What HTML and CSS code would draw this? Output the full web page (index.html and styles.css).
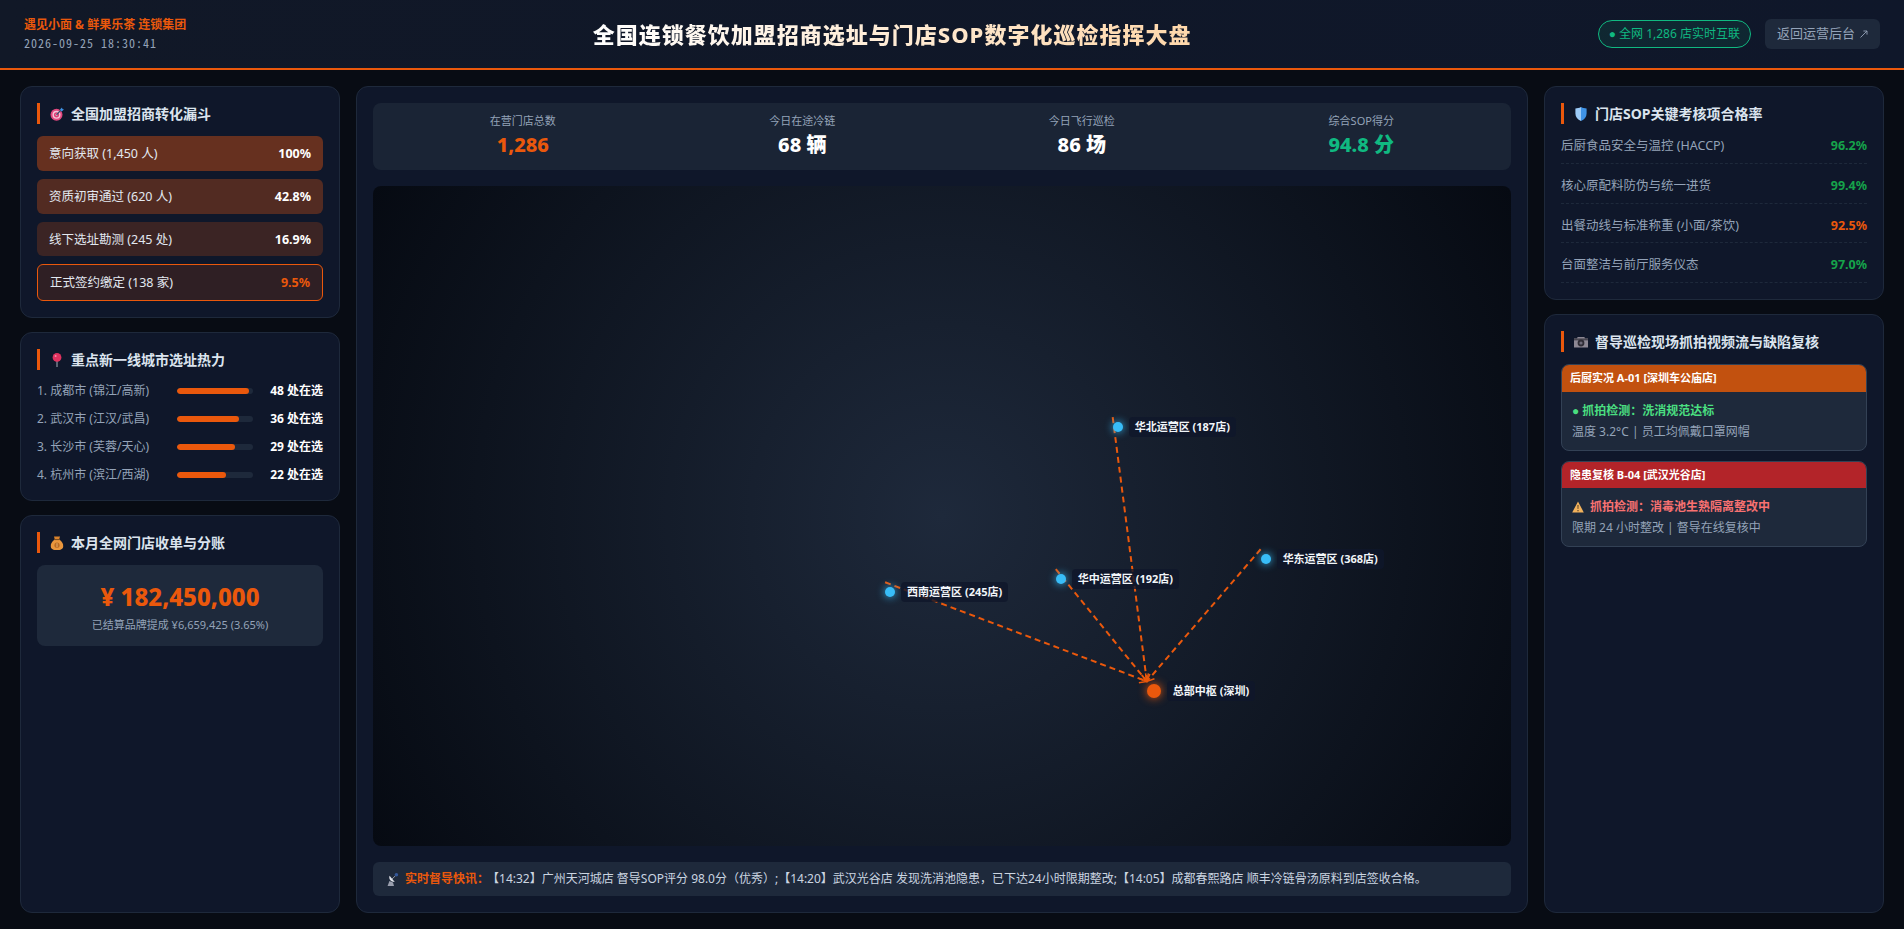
FILE: index.html
```html
<!DOCTYPE html>
<html lang="zh-CN">
<head>
    <meta charset="UTF-8">
    <meta name="viewport" content="width=device-width, initial-scale=1.0">
    <title>全国连锁餐饮加盟招商选址与门店SOP数字化巡检指挥大盘</title>
    <link rel="stylesheet" href="styles.css">
</head>
<body>
    <header class="topbar">
        <div class="brand">
            <div class="brand-name">遇见小面 &amp; 鲜果乐茶 连锁集团</div>
            <div class="brand-time">2026-09-25 18:30:41</div>
        </div>
        <h1 class="page-title">全国连锁餐饮加盟招商选址与门店SOP数字化巡检指挥大盘</h1>
        <div class="top-actions">
            <span class="status-pill"><span class="bullet">●</span> 全网 1,286 店实时互联</span>
            <a href="#" class="btn-back">返回运营后台
                <svg class="back-arrow" viewBox="0 0 8 8"><path d="M0.5 7.5 L7 1 M3.4 1 L7 1 L7 4.6" fill="none" stroke="#94a3b8" stroke-width="0.9"/></svg>
            </a>
        </div>
    </header>

    <main class="layout">
        <!-- left column -->
        <section class="column">
            <div class="panel">
                <h2 class="panel-title">
                    <svg class="title-icon" viewBox="0 0 14 14">
                        <circle cx="6.5" cy="7.8" r="6" fill="#e2487f"/>
                        <circle cx="6.5" cy="7.8" r="4" fill="#f6c6d8"/>
                        <circle cx="6.5" cy="7.8" r="2.6" fill="#dc3f76"/>
                        <circle cx="6.5" cy="7.8" r="1" fill="#f6c6d8"/>
                        <path d="M6.5 7.8 L11 3" stroke="#35506e" stroke-width="1.2"/>
                        <path d="M10 2.6 L12 0.4 L12.4 2 L14 2.4 L11.6 4.4 Z" fill="#3f93e6"/>
                    </svg>
                    全国加盟招商转化漏斗
                </h2>
                <div class="funnel">
                    <div class="funnel-row funnel-1"><span>意向获取 (1,450 人)</span><b>100%</b></div>
                    <div class="funnel-row funnel-2"><span>资质初审通过 (620 人)</span><b>42.8%</b></div>
                    <div class="funnel-row funnel-3"><span>线下选址勘测 (245 处)</span><b>16.9%</b></div>
                    <div class="funnel-row funnel-4"><span>正式签约缴定 (138 家)</span><b>9.5%</b></div>
                </div>
            </div>

            <div class="panel">
                <h2 class="panel-title">
                    <svg class="title-icon" viewBox="0 0 14 14">
                        <path d="M7 5 L7 14" stroke="#a9b1bb" stroke-width="1"/>
                        <circle cx="7" cy="4.4" r="4.4" fill="#e0325f"/>
                        <circle cx="5.6" cy="3" r="1" fill="#f58aa6"/>
                    </svg>
                    重点新一线城市选址热力
                </h2>
                <div class="city-list">
                    <div class="city-row">
                        <span class="city-name">1. 成都市 (锦江/高新)</span>
                        <div class="city-bar"><div class="city-fill" style="width: 95%"></div></div>
                        <b class="city-value">48 处在选</b>
                    </div>
                    <div class="city-row">
                        <span class="city-name">2. 武汉市 (江汉/武昌)</span>
                        <div class="city-bar"><div class="city-fill" style="width: 82%"></div></div>
                        <b class="city-value">36 处在选</b>
                    </div>
                    <div class="city-row">
                        <span class="city-name">3. 长沙市 (芙蓉/天心)</span>
                        <div class="city-bar"><div class="city-fill" style="width: 76%"></div></div>
                        <b class="city-value">29 处在选</b>
                    </div>
                    <div class="city-row">
                        <span class="city-name">4. 杭州市 (滨江/西湖)</span>
                        <div class="city-bar"><div class="city-fill" style="width: 65%"></div></div>
                        <b class="city-value">22 处在选</b>
                    </div>
                </div>
            </div>

            <div class="panel panel-fill">
                <h2 class="panel-title">
                    <svg class="title-icon" viewBox="0 0 14 14">
                        <path d="M4.6 3.6 C1.6 6 0.6 8 0.8 10.4 C1 13 3.4 14 7 14 C10.6 14 13 13 13.2 10.4 C13.4 8 12.4 6 9.4 3.6 Z" fill="#e9963d"/>
                        <path d="M4 0.6 L10 0.6 L9.2 3.6 L4.8 3.6 Z" fill="#d9822b"/>
                        <path d="M4.4 3.6 L9.6 3.6" stroke="#7a4a1c" stroke-width="1"/>
                        <circle cx="7" cy="9.2" r="2.6" fill="#b96a22"/>
                        <path d="M7 7.2 L7 11.2" stroke="#f3c07d" stroke-width="0.8"/>
                    </svg>
                    本月全网门店收单与分账
                </h2>
                <div class="money-box">
                    <div class="money-amount">¥ 182,450,000</div>
                    <div class="money-sub">已结算品牌提成 ¥6,659,425 (3.65%)</div>
                </div>
            </div>
        </section>

        <!-- center column -->
        <section class="panel panel-center">
            <div class="kpi-bar">
                <div class="kpi"><div class="kpi-label">在营门店总数</div><div class="kpi-value orange">1,286</div></div>
                <div class="kpi"><div class="kpi-label">今日在途冷链</div><div class="kpi-value">68 辆</div></div>
                <div class="kpi"><div class="kpi-label">今日飞行巡检</div><div class="kpi-value">86 场</div></div>
                <div class="kpi"><div class="kpi-label">综合SOP得分</div><div class="kpi-value green">94.8 分</div></div>
            </div>

            <div class="map">
                <svg class="map-lines">
                    <defs>
                        <marker id="arrow" markerUnits="userSpaceOnUse" markerWidth="10" markerHeight="10" refX="8" refY="5" orient="auto">
                            <path d="M1,1 L8,5 L1,9" fill="none" stroke="#ea580c" stroke-width="1.5"/>
                        </marker>
                    </defs>
                    <line x1="65%" y1="35%" x2="68%" y2="75%" marker-end="url(#arrow)"/>
                    <line x1="60%" y1="58%" x2="68%" y2="75%" marker-end="url(#arrow)"/>
                    <line x1="45%" y1="60%" x2="68%" y2="75%" marker-end="url(#arrow)"/>
                    <line x1="78%" y1="55%" x2="68%" y2="75%" marker-end="url(#arrow)"/>
                </svg>
                <div class="node node-hq"><span class="dot dot-hq"></span><span class="node-label">总部中枢 (深圳)</span></div>
                <div class="node node-north"><span class="dot"></span><span class="node-label">华北运营区 (187店)</span></div>
                <div class="node node-central"><span class="dot"></span><span class="node-label">华中运营区 (192店)</span></div>
                <div class="node node-west"><span class="dot"></span><span class="node-label">西南运营区 (245店)</span></div>
                <div class="node node-east"><span class="dot"></span><span class="node-label">华东运营区 (368店)</span></div>
            </div>

            <div class="ticker">
                <svg class="ticker-icon" viewBox="0 0 12 13">
                    <path d="M2.4 8 L6 9.4 L7 13 L0.6 13 Z" fill="#9a9fae"/>
                    <path d="M2.6 2.8 C1.4 5.6 3.4 9 7.8 9 Z" fill="#e2e5ec"/>
                    <path d="M5 6 L8.6 2.6" stroke="#aeb4c0" stroke-width="0.8"/>
                    <circle cx="9.4" cy="1.8" r="1.8" fill="#34589a"/>
                </svg>
                <b class="ticker-label">实时督导快讯：</b>
                <span>【14:32】广州天河城店 督导SOP评分 98.0分（优秀）;【14:20】武汉光谷店 发现洗消池隐患，已下达24小时限期整改;【14:05】成都春熙路店 顺丰冷链骨汤原料到店签收合格。</span>
            </div>
        </section>

        <!-- right column -->
        <section class="column">
            <div class="panel">
                <h2 class="panel-title">
                    <svg class="title-icon" viewBox="0 0 14 14">
                        <path d="M7 0 C5 1 3.4 1.4 1.4 1.4 L1.4 6.6 C1.4 10 3.6 12.6 7 14 Z" fill="#9ccbf7"/>
                        <path d="M7 0 C9 1 10.6 1.4 12.6 1.4 L12.6 6.6 C12.6 10 10.4 12.6 7 14 Z" fill="#3f93e6"/>
                    </svg>
                    门店SOP关键考核项合格率
                </h2>
                <div class="sop-list">
                    <div class="sop-row"><span>后厨食品安全与温控 (HACCP)</span><b class="green-dark">96.2%</b></div>
                    <div class="sop-row"><span>核心原配料防伪与统一进货</span><b class="green-dark">99.4%</b></div>
                    <div class="sop-row"><span>出餐动线与标准称重 (小面/茶饮)</span><b class="orange">92.5%</b></div>
                    <div class="sop-row"><span>台面整洁与前厅服务仪态</span><b class="green-dark">97.0%</b></div>
                </div>
            </div>

            <div class="panel panel-fill">
                <h2 class="panel-title">
                    <svg class="title-icon" viewBox="0 0 14 14">
                        <path d="M0 3.4 L3 3.4 L3.6 2 L10.4 2 L11 3.4 L14 3.4 L14 12.4 L0 12.4 Z" fill="#8d8894"/>
                        <path d="M0 3.4 L14 3.4 L14 5.4 L0 5.4 Z" fill="#4a4852"/>
                        <circle cx="7" cy="8" r="3.4" fill="#2f2d36"/>
                        <circle cx="7" cy="8" r="1.6" fill="#6d6a78"/>
                    </svg>
                    督导巡检现场抓拍视频流与缺陷复核
                </h2>
                <div class="cam-list">
                    <div class="cam-card">
                        <div class="cam-head cam-head-ok">后厨实况 A-01 [深圳车公庙店]</div>
                        <div class="cam-body">
                            <div class="cam-check cam-ok"><span class="bullet">●</span> 抓拍检测：洗消规范达标</div>
                            <div class="cam-note">温度 3.2°C | 员工均佩戴口罩网帽</div>
                        </div>
                    </div>
                    <div class="cam-card">
                        <div class="cam-head cam-head-bad">隐患复核 B-04 [武汉光谷店]</div>
                        <div class="cam-body">
                            <div class="cam-check cam-bad">
                                <svg class="warn-icon" viewBox="0 0 12 12">
                                    <path d="M6 0.6 L11.8 11.4 L0.2 11.4 Z" fill="#f2b25c"/>
                                    <path d="M5.4 4 L6.6 4 L6.4 8 L5.6 8 Z M5.4 9 L6.6 9 L6.6 10.2 L5.4 10.2 Z" fill="#5b4326"/>
                                </svg>
                                抓拍检测：消毒池生熟隔离整改中
                            </div>
                            <div class="cam-note">限期 24 小时整改 | 督导在线复核中</div>
                        </div>
                    </div>
                </div>
            </div>
        </section>
    </main>
</body>
</html>
```

FILE: styles.css
```css
* {
    box-sizing: border-box;
}
body {
    font-family: "Noto Sans", "Noto Sans CJK SC", sans-serif;
    line-height: 1.5;
    margin: 0;
    height: 929px;
    overflow: hidden;
    display: flex;
    flex-direction: column;
    background-color: #080c14;
    color: #e2e8f0;
}

/* top bar */
.topbar {
    height: 70px;
    flex: none;
    display: flex;
    align-items: center;
    justify-content: space-between;
    padding: 0 24px;
    background: linear-gradient(90deg, #111827, #0f172a);
    border-bottom: 2px solid #ea580c;
}
.brand-name {
    font-size: 12px;
    font-weight: 700;
    color: #ea580c;
}
.brand-time {
    font-family: "Noto Sans Mono CJK SC", "Liberation Mono", monospace;
    font-size: 12px;
    letter-spacing: 1px;
    color: #94a3b8;
}
.page-title {
    margin: 0;
    font-size: 22px;
    font-weight: 800;
    letter-spacing: 1px;
    background: linear-gradient(90deg, #ffffff, #fed7aa);
    -webkit-background-clip: text;
    background-clip: text;
    color: transparent;
}
.top-actions {
    display: flex;
    align-items: center;
    gap: 14px;
}
.status-pill {
    height: 28px;
    display: flex;
    align-items: center;
    gap: 3px;
    padding: 0 10px;
    font-size: 12px;
    color: #10b981;
    background: rgba(16, 185, 129, 0.1);
    border: 1px solid #10b981;
    border-radius: 14px;
}
.bullet {
    font-family: "Liberation Sans", sans-serif;
}
.btn-back {
    height: 30px;
    display: flex;
    align-items: center;
    gap: 5px;
    padding: 0 12px 0 12px;
    font-size: 13px;
    color: #94a3b8;
    background: #1e293b;
    border-radius: 6px;
    text-decoration: none;
}
.back-arrow {
    width: 8px;
    height: 8px;
    flex: none;
}

/* page grid */
.layout {
    flex: 1;
    min-height: 0;
    display: grid;
    grid-template-columns: 320px 1fr 340px;
    gap: 16px;
    padding: 16px 20px;
}
.column {
    display: flex;
    flex-direction: column;
    gap: 14px;
    min-height: 0;
}
.panel {
    background: #0f172a;
    border: 1px solid #1e293b;
    border-radius: 12px;
    padding: 16px;
}
.panel-fill {
    flex: 1;
}
.panel-title {
    display: flex;
    align-items: center;
    gap: 7px;
    margin: 0 0 12px;
    padding-left: 10px;
    border-left: 3px solid #ea580c;
    font-size: 14px;
    font-weight: 700;
    color: #dbe4ee;
}
.title-icon {
    width: 14px;
    height: 14px;
    flex: none;
}

/* funnel */
.funnel {
    display: flex;
    flex-direction: column;
    gap: 8px;
}
.funnel-row {
    display: flex;
    justify-content: space-between;
    padding: 9px 12px 7px;
    font-size: 12.5px;
    border-radius: 6px;
}
.funnel-row b {
    color: #fff;
}
.funnel-1 { background: #66301f; }
.funnel-2 { background: #522b22; }
.funnel-3 { background: #3b2424; }
.funnel-4 {
    background: #2f1f24;
    border: 1px solid #ea580c;
}
.funnel-4 b {
    color: #ea580c;
}

/* city list */
.city-list {
    display: flex;
    flex-direction: column;
    gap: 10px;
}
.city-row {
    display: flex;
    align-items: center;
    font-size: 12px;
}
.city-name {
    width: 140px;
    color: #94a3b8;
}
.city-bar {
    flex: 1;
    height: 6px;
    background: #1e293b;
    border-radius: 3px;
    overflow: hidden;
}
.city-fill {
    height: 100%;
    background: #ea580c;
    border-radius: 3px;
}
.city-value {
    width: 70px;
    text-align: right;
    color: #fff;
}

/* money */
.money-box {
    background: #1e293b;
    border-radius: 8px;
    padding: 14px 14px 12px;
    text-align: center;
}
.money-amount {
    font-size: 24px;
    font-weight: 800;
    color: #ea580c;
}
.money-sub {
    font-size: 11px;
    color: #94a3b8;
    margin-top: 2px;
}

/* center */
.panel-center {
    display: flex;
    flex-direction: column;
    gap: 16px;
    min-height: 0;
}
.kpi-bar {
    display: grid;
    grid-template-columns: repeat(4, 1fr);
    padding: 10px;
    background: #1a2435;
    border-radius: 8px;
    text-align: center;
}
.kpi-label {
    font-size: 11px;
    color: #94a3b8;
}
.kpi-value {
    font-size: 20px;
    font-weight: 800;
    color: #fff;
}
.orange { color: #ea580c; }
.kpi-value.green { color: #10b981; }
.green-dark { color: #16a34a; }

.map {
    position: relative;
    flex: 1;
    min-height: 0;
    border-radius: 8px;
    overflow: hidden;
    background: radial-gradient(circle at center, #1e293b 0%, #060a12 100%);
}
.map-lines {
    position: absolute;
    left: 0;
    top: 0;
    width: 100%;
    height: 100%;
}
.map-lines line {
    stroke: #ea580c;
    stroke-width: 2;
    stroke-dasharray: 6 4;
}
.node {
    position: absolute;
    display: flex;
    align-items: center;
    gap: 6px;
}
.node-hq { left: 68%; top: 75%; }
.node-north { left: 65%; top: 35%; }
.node-central { left: 60%; top: 58%; }
.node-west { left: 45%; top: 60%; }
.node-east { left: 78%; top: 55%; }
.dot {
    width: 10px;
    height: 10px;
    border-radius: 50%;
    background: #38bdf8;
    box-shadow: 0 0 8px #38bdf8;
}
.dot-hq {
    width: 14px;
    height: 14px;
    background: #ea580c;
    box-shadow: 0 0 10px #ea580c;
}
.node-label {
    padding: 2px 6px;
    font-size: 11px;
    font-weight: 700;
    color: #f1f5f9;
    background: rgba(15, 23, 42, 0.8);
    border-radius: 4px;
}

.ticker {
    display: flex;
    align-items: center;
    padding: 8px 14px;
    font-size: 12px;
    color: #cbd5e1;
    background: #1e293b;
    border-radius: 6px;
}
.ticker-icon {
    width: 12px;
    height: 13px;
    flex: none;
    margin-right: 6px;
}
.ticker-label {
    color: #ea580c;
    margin-right: -2px;
}

/* right column */
.sop-list {
    display: flex;
    flex-direction: column;
    gap: 12px;
}
.sop-row {
    display: flex;
    justify-content: space-between;
    padding: 1px 0 7px;
    border-bottom: 1px dashed #1e293b;
    font-size: 12.5px;
    color: #94a3b8;
}
.cam-list {
    display: flex;
    flex-direction: column;
    gap: 10px;
}
.cam-card {
    background: #1e293b;
    border: 1px solid #334155;
    border-radius: 8px;
    overflow: hidden;
}
.cam-head {
    padding: 5px 8px;
    font-size: 11px;
    font-weight: 700;
    color: #fff;
}
.cam-head-ok { background: #c2510f; }
.cam-head-bad { background: #b32429; }
.cam-body {
    padding: 10px 10px 9px;
}
.cam-check {
    display: flex;
    align-items: center;
    gap: 6px;
    font-size: 12px;
    font-weight: 700;
    margin-bottom: 3px;
}
.cam-ok { gap: 3px; color: #4ade80; }
.cam-bad { color: #f87171; }
.warn-icon {
    width: 12px;
    height: 12px;
    flex: none;
}
.cam-note {
    font-size: 12px;
    color: #94a3b8;
}
```
